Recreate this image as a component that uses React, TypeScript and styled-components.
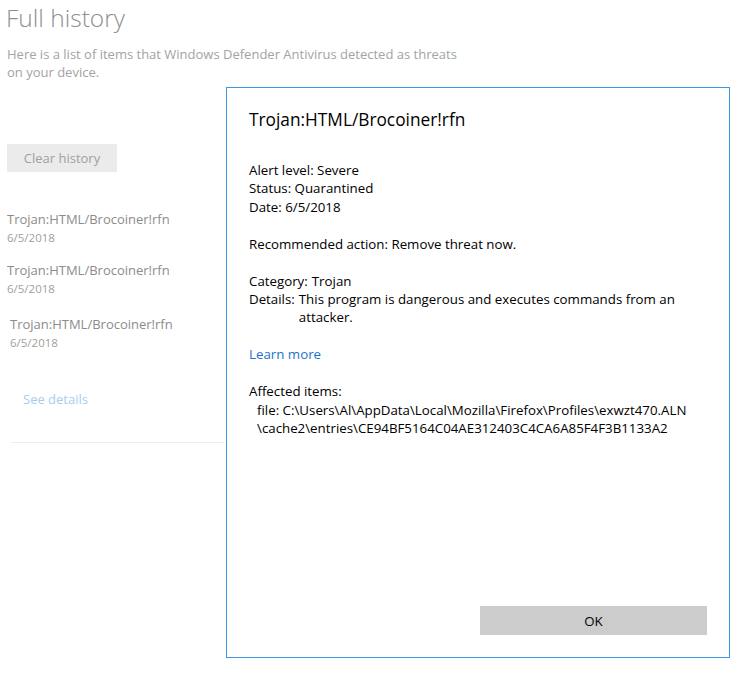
import * as React from 'react'
import styled, { createGlobalStyle } from 'styled-components';

const GlobalStyle = createGlobalStyle`
  html, body {
    margin: 0;
    padding: 0;
    background: #fff;
  }
  body {
    font-family: "Open Sans", "Noto Sans", sans-serif;
  }
`;

interface IThreat {
  name: string;
  date: string;
  indent?: number;
}

const threats: IThreat[] = [
  { name: 'Trojan:HTML/Brocoiner!rfn', date: '6/5/2018' },
  { name: 'Trojan:HTML/Brocoiner!rfn', date: '6/5/2018' },
  { name: 'Trojan:HTML/Brocoiner!rfn', date: '6/5/2018', indent: 3 },
];

const Page = styled.div`
  position: relative;
  width: 750px;
  height: 687px;
  overflow: hidden;
  background: #fff;
`;

const History = styled.div`
  padding: 0 0 0 6px;
  width: 220px;
`;

const PageTitle = styled.h1`
  margin: 0;
  padding-top: 1px;
  font-size: 24.5px;
  font-weight: 300;
  line-height: 34px;
  color: #8f8f8f;
`;

const Intro = styled.p`
  margin: 10px 0 0 1px;
  width: 460px;
  font-size: 13px;
  line-height: 18px;
  color: #a3a3a3;
`;

const ClearButton = styled.div`
  margin: 63px 0 0 1px;
  width: 110px;
  height: 28px;
  background: #ebebeb;
  color: #a0a0a0;
  font-size: 13px;
  display: flex;
  align-items: center;
  justify-content: center;
`;

const ThreatList = styled.div`
  margin-top: 38px;
  display: flex;
  flex-direction: column;
  gap: 13px;
`;

const ThreatItem = styled.div<{ $indent?: number }>`
  padding-left: ${p => (p.$indent || 0) + 1}px;
  &:last-child {
    margin-top: 3px;
  }
`;

const ThreatName = styled.div`
  font-size: 13px;
  line-height: 18px;
  color: #8c8c8c;
  white-space: nowrap;
`;

const ThreatDate = styled.div`
  font-size: 11.5px;
  line-height: 20px;
  color: #a0a0a0;
`;

const SeeDetails = styled.div`
  margin: 37px 0 0 17px;
  font-size: 13px;
  line-height: 18px;
  color: #a6cdf0;
`;

const Divider = styled.div`
  margin: 34px 0 0 5px;
  width: 214px;
  height: 1px;
  background: #ededed;
`;

/* modal sits over the history page */
const Dialog = styled.div`
  position: absolute;
  left: 226px;
  top: 87px;
  width: 504px;
  height: 571px;
  box-sizing: border-box;
  border: 1px solid #3c98e6;
  background: #fff;
  padding: 20px 22px 22px 22px;
  display: flex;
  flex-direction: column;
  color: #000;
`;

const DialogTitle = styled.h2`
  margin: 0;
  font-size: 17.3px;
  font-weight: 400;
  line-height: 24px;
`;

const Body = styled.div`
  margin-top: 29px;
  font-size: 13.3px;
  line-height: 18.43px;
`;

const Section = styled.div`
  & + & {
    margin-top: 18.43px;
  }
`;

const Field = styled.div`
  display: flex;
  gap: 4px;
`;

const Label = styled.span`
  flex: none;
`;

const Link = styled.div`
  color: #1a74cc;
`;

const Indented = styled.div`
  padding-left: 8px;
`;

const OkButton = styled.div`
  margin-top: auto;
  align-self: flex-end;
  width: 227px;
  height: 29px;
  background: #cccccc;
  font-size: 13.3px;
  display: flex;
  align-items: center;
  justify-content: center;
`;

export default function App() {
  return (
    <Page>
      <GlobalStyle />
      <History>
        <PageTitle>Full history</PageTitle>
        <Intro>Here is a list of items that Windows Defender Antivirus detected as threats on your device.</Intro>
        <ClearButton>Clear history</ClearButton>
        <ThreatList>
          {threats.map((t, i) => (
            <ThreatItem key={i} $indent={t.indent}>
              <ThreatName>{t.name}</ThreatName>
              <ThreatDate>{t.date}</ThreatDate>
            </ThreatItem>
          ))}
        </ThreatList>
        <SeeDetails>See details</SeeDetails>
        <Divider />
      </History>

      <Dialog>
        <DialogTitle>Trojan:HTML/Brocoiner!rfn</DialogTitle>
        <Body>
          <Section>
            <div>Alert level: Severe</div>
            <div>Status: Quarantined</div>
            <div>Date: 6/5/2018</div>
          </Section>
          <Section>Recommended action: Remove threat now.</Section>
          <Section>
            <Field>
              <Label>Category:</Label>
              <span>Trojan</span>
            </Field>
            <Field>
              <Label>Details:</Label>
              <span>This program is dangerous and executes commands from an attacker.</span>
            </Field>
          </Section>
          <Section>
            <Link>Learn more</Link>
          </Section>
          <Section>
            <div>Affected items:</div>
            <Indented>
              file: C:\Users\Al\AppData\Local\Mozilla\Firefox\Profiles\exwzt470.ALN
              <br />
              \cache2\entries\CE94BF5164C04AE312403C4CA6A85F4F3B1133A2
            </Indented>
          </Section>
        </Body>
        <OkButton>OK</OkButton>
      </Dialog>
    </Page>
  );
}
